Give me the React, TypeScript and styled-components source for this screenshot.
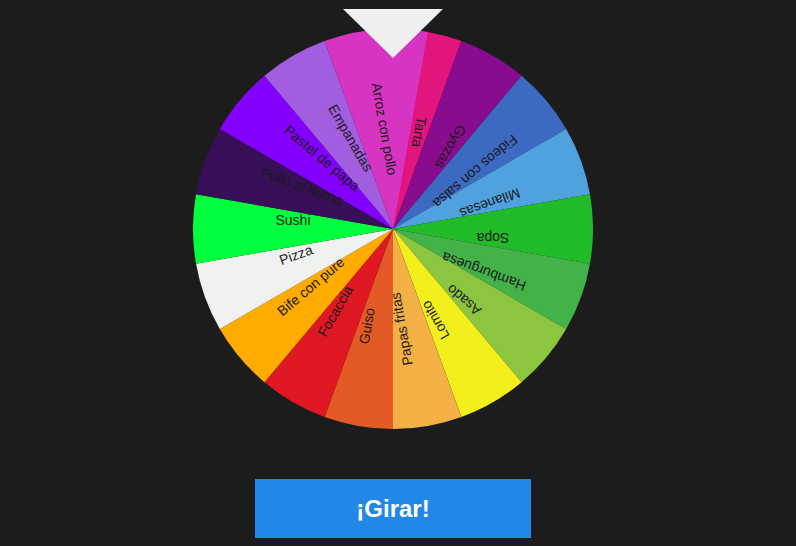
import React from "react";
import styled, { createGlobalStyle } from "styled-components";

const GlobalStyle = createGlobalStyle`
  html, body {
    margin: 0;
    padding: 0;
    background: #1c1c1c;
    font-family: "Liberation Sans", Arial, sans-serif;
  }
`;

const Page = styled.div`
  width: 786px;
  min-height: 546px;
  display: flex;
  flex-direction: column;
  align-items: center;
  padding-top: 29px;
  box-sizing: border-box;
`;

const WheelArea = styled.div`
  position: relative;
  width: 400px;
  height: 400px;
`;

const Pointer = styled.div`
  position: absolute;
  top: -20px;
  left: 50%;
  transform: translateX(-50%);
  width: 0;
  height: 0;
  border-left: 50px solid transparent;
  border-right: 50px solid transparent;
  border-top: 49px solid #f0f0f0;
  z-index: 2;
`;

const WheelSvg = styled.svg`
  display: block;
  width: 400px;
  height: 400px;
`;

const Label = styled.text`
  font-family: "Liberation Sans", Arial, sans-serif;
  font-size: 14px;
  fill: #1a1a1a;
`;

const SpinButton = styled.button`
  margin-top: 50px;
  width: 276px;
  height: 59px;
  border: none;
  background: #2188e8;
  color: #ffffff;
  font-family: "Liberation Sans", Arial, sans-serif;
  font-weight: bold;
  font-size: 24px;
  cursor: pointer;
`;

type Slice = { name: string; color: string; extra?: number };

const slices: Slice[] = [
  { name: "Tarta", color: "#e2157e" },
  { name: "Gyozas", color: "#8a0c8e" },
  { name: "Fideos con salsa", color: "#3c69c2" },
  { name: "Milanesas", color: "#4fa2de" },
  { name: "Sopa", color: "#22bc2a" },
  { name: "Hamburguesa", color: "#43b249" },
  { name: "Asado", color: "#8cc641" },
  { name: "Lomito", color: "#f2ef1c" },
  { name: "Papas fritas", color: "#f2b045" },
  { name: "Guiso", color: "#e35a26" },
  { name: "Focaccia", color: "#e01824" },
  { name: "Bife con pure", color: "#ffab00" },
  { name: "Pizza", color: "#f0f2f0" },
  { name: "Sushi", color: "#00ff3c" },
  { name: "Pollo al horno", color: "#360f58" },
  { name: "Pastel de papa", color: "#8400ff" },
  { name: "Empanadas", color: "#a25de0" },
  { name: "Arroz con pollo", color: "#d834c2", extra: 10 },
];

const R = 200;
const C = 200;

const pt = (deg: number, r: number) => {
  const a = (deg * Math.PI) / 180;
  return [C + r * Math.cos(a), C + r * Math.sin(a)];
};

const wedge = (start: number, end: number) => {
  const [x1, y1] = pt(start, R);
  const [x2, y2] = pt(end, R);
  const large = end - start > 180 ? 1 : 0;
  return `M ${C} ${C} L ${x1} ${y1} A ${R} ${R} 0 ${large} 1 ${x2} ${y2} Z`;
};

export default function App() {
  return (
    <>
      <GlobalStyle />
      <Page>
        <WheelArea>
          <Pointer />
          <WheelSvg viewBox="0 0 400 400">
            {slices.map((s, i) => {
              const start = -90 + 20 * i;
              const end = start + 20 + (s.extra ?? 0);
              return <path key={s.name} d={wedge(start, end)} fill={s.color} />;
            })}
            {slices.map((s, i) => {
              const mid = -80 + 20 * i;
              return (
                <Label
                  key={`l-${s.name}`}
                  x={-100}
                  y={-4}
                  textAnchor="middle"
                  transform={`translate(${C} ${C}) rotate(${mid + 180})`}
                >
                  {s.name}
                </Label>
              );
            })}
          </WheelSvg>
        </WheelArea>
        <SpinButton>¡Girar!</SpinButton>
      </Page>
    </>
  );
}
